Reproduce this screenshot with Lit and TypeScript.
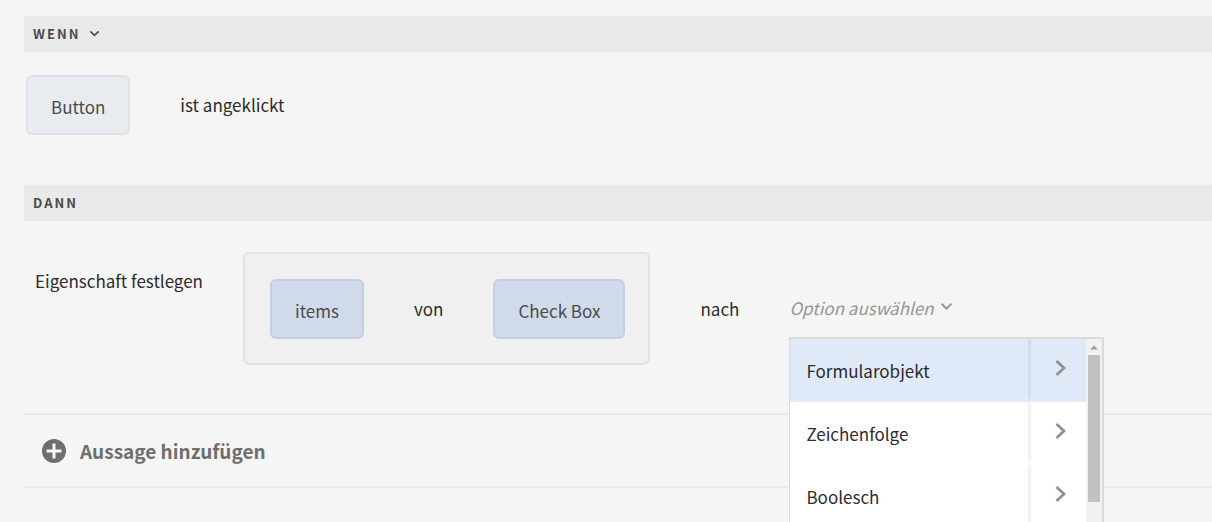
import { LitElement, html, css } from "lit";
import { customElement, state } from "lit/decorators.js";

@customElement("app-root")
export class AppRoot extends LitElement {
  @state() private active = 0;

  private options = ["Formularobjekt", "Zeichenfolge", "Boolesch"];

  static styles = css`
    :host {
      display: block;
      box-sizing: border-box;
      height: 100vh;
      overflow: hidden;
      padding: 16px 0 0 24px;
      background: #f5f5f5;
      color: #2c2c2c;
      font-family: "Noto Sans CJK SC", "Noto Sans", sans-serif;
      font-size: 17px;
      line-height: 24px;
    }
    * {
      box-sizing: border-box;
    }
    button,
    select {
      margin: 0;
      padding: 0;
      border: 0;
      border-radius: 0;
      background: none;
      color: inherit;
      font: inherit;
      appearance: none;
      cursor: pointer;
      outline: none;
    }
    svg {
      display: block;
      flex: none;
      fill: none;
      pointer-events: none;
    }
    .bar {
      display: flex;
      align-items: center;
      gap: 8px;
      height: 36px;
      margin: 0;
      padding: 0 9px;
      background: #e9e9e9;
      color: #4b4b4b;
      font-size: 13px;
      font-weight: 700;
      line-height: 36px;
      letter-spacing: 2px;
    }
    .bar select {
      letter-spacing: inherit;
    }
    .row {
      display: flex;
      align-items: center;
      gap: 50px;
      white-space: nowrap;
    }
    .when {
      padding: 23px 2px 50px;
    }
    .chip {
      flex: none;
      height: 60px;
      padding: 4px 23px 0;
      border: 2px solid #dde2e7;
      border-radius: 6px;
      background: #e8ecf1;
      color: #4b4b4b;
    }
    .chip.blue {
      border-color: #c3cfe2;
      background: #d0daea;
    }
    .then {
      padding: 31px 11px 48px;
    }
    .label {
      align-self: flex-start;
      margin-right: -10px;
      line-height: 58px;
    }
    .group {
      padding: 25px 23px 24px 25px;
      border: 2px solid #e2e2e2;
      border-radius: 6px;
      background: #f0f0f0;
    }
    .picker {
      position: relative;
      align-self: flex-start;
    }
    .field {
      display: flex;
      align-items: center;
      width: 164px;
      height: 86px;
      padding-top: 26px;
      border-bottom: 1px solid #c4c4c4;
      color: #959595;
    }
    .field select {
      flex: 1;
      min-width: 0;
      height: 58px;
      font-style: italic;
    }
    .menu {
      position: absolute;
      top: 85px;
      left: 0;
      display: flex;
      width: 315px;
      height: 220px;
      border: solid #dadada;
      border-width: 2px 2px 2px 1px;
      background: #fff;
      z-index: 1;
    }
    .items {
      flex: 1;
    }
    .item {
      display: flex;
      height: 63px;
    }
    .item.on {
      background: #dfe9f7;
    }
    .name {
      flex: 1;
      padding: 0 16px;
      text-align: left;
    }
    .more {
      display: flex;
      align-items: center;
      width: 58px;
      height: 60px;
      padding: 0 0 2px 24px;
      border-left: 3px solid #f2f2f2;
    }
    .on .more {
      border-color: #d2dcec;
    }
    .scroll {
      display: flex;
      flex-direction: column;
      align-items: center;
      gap: 5px;
      width: 16px;
      padding-top: 6px;
      background: #f1f1f1;
    }
    .thumb {
      width: 12px;
      height: 147px;
      background: #c1c1c1;
    }
    .add {
      display: flex;
      align-items: center;
      height: 75px;
      padding: 0 18px;
      border: solid #e9e9e9;
      border-width: 2px 0;
    }
    .add button {
      display: flex;
      align-items: center;
      gap: 14px;
      color: #6e6e6e;
      font-size: 19px;
      font-weight: 700;
    }
  `;

  private chevron(size: number) {
    return html`<svg width=${size} height=${size} viewBox="0 0 12 12" aria-hidden="true">
      <path d="M1.5 2.500 6 7 10.500 2.500" stroke="currentColor" stroke-width="1.8" />
    </svg>`;
  }

  render() {
    return html`
      <div class="bar">
        <select aria-label="Bedingung"><option>WENN</option></select>
        ${this.chevron(11)}
      </div>
      <div class="row when">
        <button class="chip">Button</button>
        <span>ist angeklickt</span>
      </div>
      <h2 class="bar">DANN</h2>
      <div class="row then">
        <span class="label">Eigenschaft festlegen</span>
        <div class="row group">
          <button class="chip blue">items</button>
          <span>von</span>
          <button class="chip blue">Check Box</button>
        </div>
        <label for="target">nach</label>
        <div class="picker">
          <div class="field">
            <select id="target"><option>Option auswählen</option></select>
            ${this.chevron(13)}
          </div>
          <div class="menu">
            <div class="items">
              ${this.options.map(
                (name, i) => html`<div
                  class="item ${i === this.active ? "on" : ""}"
                  @mouseenter=${() => (this.active = i)}
                >
                  <button class="name">${name}</button>
                  <button class="more" aria-label="${name} öffnen">
                    <svg width="12" height="18" viewBox="0 0 12 18">
                      <path d="M1.5 2 9 9 1.5 16" stroke="#929292" stroke-width="2.8" />
                    </svg>
                  </button>
                </div>`
              )}
            </div>
            <div class="scroll">
              <svg width="8" height="5" viewBox="0 0 8 5"><path d="M0 4.500 4 .5 8 4.500Z" fill="#a0a0a0" /></svg>
              <div class="thumb"></div>
            </div>
          </div>
        </div>
      </div>
      <div class="add">
        <button>
          <svg width="24" height="24" viewBox="0 0 24 24">
            <circle cx="12" cy="12" r="12" fill="#6e6e6e" />
            <path d="M12 4.500v15M4.500 12h15" stroke="#f5f5f5" stroke-width="3" />
          </svg>
          Aussage hinzufügen
        </button>
      </div>
    `;
  }
}
